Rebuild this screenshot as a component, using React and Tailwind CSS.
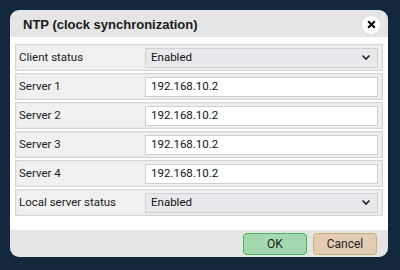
import React from "react";

function Row({ label, children }) {
  return (
    <div className="flex h-[27px] items-center border border-[#d6d6d6] bg-[#f0f0f0] pl-[3px] pr-[4px] shadow-[inset_0_0_0_1px_#e8e8e8]">
      <div className="w-[126px] text-[11.5px] text-[#222]">{label}</div>
      <div className="flex-1">{children}</div>
    </div>
  );
}

function Input({ value }) {
  return (
    <div className="flex h-[20px] items-center border border-[#cfcfcf] bg-white px-[5px] text-[11.5px] text-[#111]">
      {value}
    </div>
  );
}

function Select({ value }) {
  return (
    <div className="flex h-[20px] items-center justify-between border border-[#d2d2d2] bg-[#e9e9ed] pl-[5px] pr-[6px] text-[11.5px] text-[#111]">
      <span>{value}</span>
      <svg width="10" height="7" viewBox="0 0 10 7">
        <path d="M1.5 1.5 L5 5 L8.5 1.5" fill="none" stroke="#222" strokeWidth="1.6" />
      </svg>
    </div>
  );
}

export default function App() {
  return (
    <div
      className="flex h-[270px] w-[400px] items-start bg-[#14283d] pl-[10px] pt-[10px]"
      style={{ fontFamily: 'Roboto, "Liberation Sans", Arial, sans-serif' }}
    >
      <div className="flex h-[247px] w-[378px] flex-col overflow-hidden rounded-[9px] bg-[#e5e5e5]">
        <div className="flex h-[27px] items-center justify-between pl-[13px] pr-[8px] pt-[2px]">
          <span
            className="text-[13px] font-bold text-[#1a1a1a]"
            style={{ fontFamily: '"Liberation Sans", Arial, sans-serif' }}
          >
            NTP (clock synchronization)
          </span>
          <div className="flex h-[18px] w-[18px] items-center justify-center rounded-full bg-white">
            <svg width="9" height="9" viewBox="0 0 9 9">
              <path d="M1.2 1.2 L7.8 7.8 M7.8 1.2 L1.2 7.8" stroke="#000" strokeWidth="2" />
            </svg>
          </div>
        </div>
        <div className="flex h-[193px] flex-col gap-[2px] bg-white px-[5px] pt-[7px]">
          <Row label="Client status"><Select value="Enabled" /></Row>
          <Row label="Server 1"><Input value="192.168.10.2" /></Row>
          <Row label="Server 2"><Input value="192.168.10.2" /></Row>
          <Row label="Server 3"><Input value="192.168.10.2" /></Row>
          <Row label="Server 4"><Input value="192.168.10.2" /></Row>
          <Row label="Local server status"><Select value="Enabled" /></Row>
        </div>
        <div className="flex flex-1 items-start justify-end gap-[6px] pr-[11px] pt-[3px]">
          <button className="h-[22px] w-[64px] rounded-[4px] border-[1.5px] border-[#45b858] bg-[#a4d9b0] text-[12px] text-[#222]">
            OK
          </button>
          <button className="h-[22px] w-[64px] rounded-[4px] border-[1.5px] border-[#c9b36a] bg-[#e4cdb4] text-[12px] text-[#222]">
            Cancel
          </button>
        </div>
      </div>
    </div>
  );
}
